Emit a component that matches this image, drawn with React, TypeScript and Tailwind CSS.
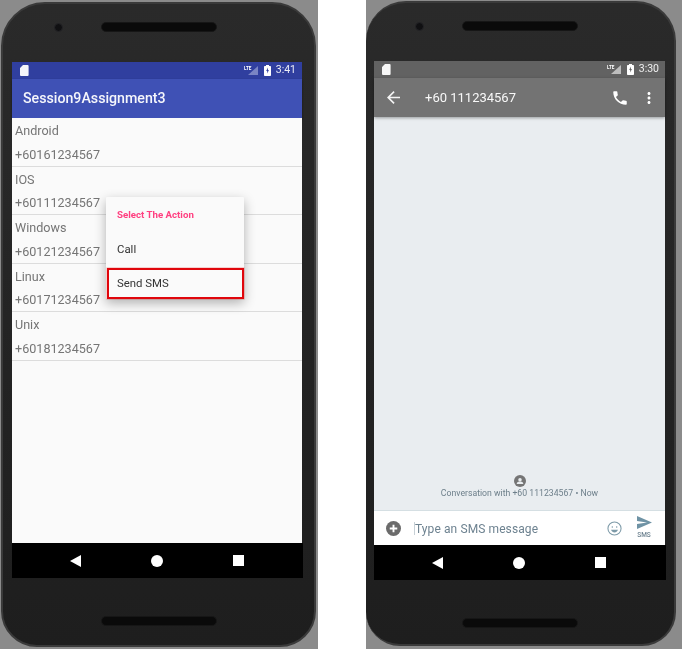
const font = "font-['Roboto',sans-serif]";

function SdIcon() {
  return (
    <svg width="9" height="11" viewBox="0 0 9 11" fill="#fff" className="opacity-95">
      <path d="M3 0h4.600a1 1 0 0 1 1 1v9a1 1 0 0 1-1 1H1a1 1 0 0 1-1-1V3z" />
    </svg>
  );
}

function Signal({ tone }: { tone: string }) {
  return (
    <svg width="15" height="11" viewBox="0 0 15 11">
      <path d="M14 1v9H4z" fill={tone} />
      <text x="0" y="4.500" fontSize="4.600" fontWeight="700" fill="#fff" fontFamily="Roboto, sans-serif">LTE</text>
    </svg>
  );
}

function Battery({ bg }: { bg: string }) {
  return (
    <svg width="7" height="11" viewBox="0 0 7 11">
      <path d="M2 0h3v1h1.200a.8.8 0 0 1 .8.8v8.400a.8.8 0 0 1-.8.8H.8a.8.8 0 0 1-.8-.8V1.800a.8.8 0 0 1 .8-.8H2z" fill="#fff" />
      <path d="M3.900 2.500 2.200 6h1v2.600L4.900 5h-1z" fill={bg} />
    </svg>
  );
}

function StatusBar({ bg, tone, time }: { bg: string; tone: string; time: string }) {
  return (
    <div className="h-[17px] flex items-center justify-between pl-[8px] pr-[6px] shrink-0" style={{ background: bg }}>
      <SdIcon />
      <div className="flex items-center">
        <Signal tone={tone} />
        <span className="ml-[5px]"><Battery bg={bg} /></span>
        <span className="ml-[5px] text-[10.5px] leading-none text-white/90">{time}</span>
      </div>
    </div>
  );
}

function NavBar({ w }: { w: string }) {
  return (
    <div className={`h-[35px] ${w} bg-black flex items-center pl-[58px] shrink-0`}>
      <svg width="11" height="12" viewBox="0 0 11 12"><path d="M11 0v12L0 6z" fill="#fff" /></svg>
      <div className="ml-[70px] w-[12px] h-[12px] rounded-full bg-white" />
      <div className="ml-[70px] w-[11px] h-[11px] bg-white" />
    </div>
  );
}

function Speaker() {
  return (
    <div className="w-[116px] h-[9.500px] rounded-full border border-[#161616] bg-[#181818] bg-[radial-gradient(#0a0a0a_0.8px,transparent_0.8px)] bg-[length:2px_2px]" />
  );
}

function PhoneTop({ offset }: { offset: string }) {
  return (
    <div className="relative h-[60px] shrink-0 flex justify-center pt-[20px]">
      <div className={`absolute top-[21px] ${offset} w-[9px] h-[9px] rounded-full bg-[#101012] border border-[#242427]`} />
      <Speaker />
    </div>
  );
}

const contacts = [
  ["Android", "+60161234567"],
  ["IOS", "+60111234567"],
  ["Windows", "+60121234567"],
  ["Linux", "+60171234567"],
  ["Unix", "+60181234567"],
];

function LeftPhone() {
  return (
    <div className="w-[318px] h-[649px] bg-[#8b8b8b] shrink-0 pl-[1px] pt-[2px]">
      <div className="w-[315px] h-[645px] rounded-t-[44px] rounded-b-[36px] border-[2px] border-[#3a3a3a] bg-gradient-to-b from-[#2a2a2a] to-[#1e1e1e] flex flex-col">
        <div className="-mt-[2px] -mx-[2px]">
          <PhoneTop offset="left-[53px]" />
        </div>
        <div className="ml-[9px] w-[290px] flex flex-col h-[516px] shrink-0">
          <StatusBar bg="#303f9f" tone="#7a85c4" time="3:41" />
          <div className="h-[39px] bg-[#3f51b5] flex items-center pl-[11px] text-[14.2px] font-medium text-white/95 shrink-0 shadow-[0_1px_2px_rgba(0,0,0,0.4)] relative">
            Session9Assignment3
          </div>
          <div className="relative flex-1 bg-[#fafafa]">
            {contacts.map(([name, num]) => (
              <div key={num} className="h-[48.500px] border-b border-[#dcdcdc] pl-[3px] text-[12.6px] leading-none text-[#757575] flex flex-col justify-between pt-[7px] pb-[4px]">
                <div>{name}</div>
                <div>{num}</div>
              </div>
            ))}
            <div className="absolute left-[94px] top-[79px] w-[138px] h-[102px] bg-[#fafafa] shadow-[0_4px_12px_rgba(0,0,0,0.3)] rounded-[1px]">
              <div className="h-[36px] pl-[11px] flex items-center text-[9.7px] font-bold text-[#ff4081]">Select The Action</div>
              <div className="h-[35px] pl-[11px] pb-[1px] flex items-center text-[11.4px] text-[#333]">Call</div>
              <div className="h-[31px] pl-[8px] ml-[1px] flex items-center text-[11.4px] text-[#333] border-[2px] border-[#e0060c] shadow-[0_0_0_0.5px_rgba(220,0,0,0.35)]">Send SMS</div>
            </div>
          </div>
          <NavBar w="w-[291px]" />
        </div>
        <div className="flex justify-center pt-[38px]">
          <Speaker />
        </div>
      </div>
    </div>
  );
}

function RightPhone() {
  return (
    <div className="w-[316px] h-[649px] bg-[#8b8b8b] shrink-0 pr-[6px] pt-[1px]">
      <div className="w-[310px] h-[645px] rounded-t-[40px] rounded-b-[34px] border-r-[2px] border-t-[2px] border-b-[2px] border-[#3a3a3a] bg-gradient-to-b from-[#2a2a2a] to-[#1e1e1e] flex flex-col">
        <div className="-mt-[2px]">
          <PhoneTop offset="left-[49px]" />
        </div>
        <div className="ml-[8px] w-[291px] flex flex-col h-[519px] shrink-0">
          <StatusBar bg="#626262" tone="#bdbdbd" time="3:30" />
          <div className="h-[39px] bg-[#737373] flex items-center pl-[13px] pr-[7px] shrink-0 shadow-[0_1px_3px_rgba(0,0,0,0.35)] relative">
            <svg width="13" height="13" viewBox="4 4 16 16" fill="#f4f4f4">
              <path d="M20 11H7.830l5.590-5.590L12 4l-8 8 8 8 1.410-1.410L7.830 13H20v-2z" />
            </svg>
            <span className="ml-[25px] pt-[1px] text-[13px] text-white/95 flex-1">+60 111234567</span>
            <svg width="18" height="18" viewBox="0 0 24 24" fill="#fff">
              <path d="M6.620 10.790c1.440 2.830 3.760 5.140 6.590 6.590l2.200-2.200c.27-.27.67-.36 1.020-.24 1.120.37 2.330.57 3.570.57.55 0 1 .45 1 1V20c0 .55-.45 1-1 1-9.390 0-17-7.610-17-17 0-.55.45-1 1-1h3.500c.55 0 1 .45 1 1 0 1.250.2 2.450.57 3.570.11.35.03.74-.25 1.020l-2.200 2.200z" />
            </svg>
            <svg className="ml-[11px]" width="18" height="18" viewBox="0 0 24 24" fill="#fff">
              <path d="M12 8c1.100 0 2-.9 2-2s-.9-2-2-2-2 .9-2 2 .9 2 2 2zm0 2c-1.100 0-2 .9-2 2s.9 2 2 2 2-.9 2-2-.9-2-2-2zm0 6c-1.100 0-2 .9-2 2s.9 2 2 2 2-.9 2-2-.9-2-2-2z" />
            </svg>
          </div>
          <div className="flex-1 bg-[#e9edf0] flex flex-col items-center justify-end pb-[11px] border-b border-[#d5dfe3]">
            <svg width="12" height="12" viewBox="0 0 24 24">
              <circle cx="12" cy="12" r="12" fill="#757575" />
              <circle cx="12" cy="9.500" r="3.500" fill="#e9edf0" />
              <path d="M5.500 17c0-2.600 4.300-3.800 6.500-3.800s6.500 1.200 6.500 3.800v.8h-13z" fill="#e9edf0" />
            </svg>
            <div className="text-[8.700px] leading-[12px] text-[#6d7f8a]">Conversation with +60 111234567 • Now</div>
          </div>
          <div className="h-[34px] bg-white flex items-center pl-[12px] pr-[13px] shrink-0">
            <svg width="15" height="15" viewBox="0 0 24 24">
              <circle cx="12" cy="12" r="12" fill="#6b6b6b" />
              <path d="M10.500 6h3v4.500H18v3h-4.500V18h-3v-4.500H6v-3h4.500z" fill="#fff" />
            </svg>
            <span className="ml-[13px] w-[1px] h-[13px] bg-[#c7d0d6]" />
            <span className="pt-[1px] text-[12px] text-[#6d8290] flex-1 tracking-[0.1px]">Type an SMS message</span>
            <svg width="15" height="15" viewBox="0 0 24 24" fill="none" stroke="#7d9aa8" strokeWidth="1.700">
              <circle cx="12" cy="12" r="10.500" />
              <circle cx="8.500" cy="9.500" r="1.200" fill="#7d9aa8" stroke="none" />
              <circle cx="15.500" cy="9.500" r="1.200" fill="#7d9aa8" stroke="none" />
              <path d="M6.500 14c1 3 3.200 4.300 5.500 4.300s4.500-1.300 5.500-4.300z" fill="#7d9aa8" stroke="none" />
            </svg>
            <div className="ml-[14px] flex flex-col items-center w-[16px]">
              <svg width="15" height="13" viewBox="0 0 15 13" fill="#6f93a5">
                <path d="M0 0l15 6.500L0 13V8l10-1.500L0 5z" />
              </svg>
              <span className="text-[6.500px] leading-[9px] mt-[2px] font-medium text-[#6d8290]">SMS</span>
            </div>
          </div>
          <NavBar w="w-[292px]" />
        </div>
        <div className="flex justify-center pt-[38px]">
          <Speaker />
        </div>
      </div>
    </div>
  );
}

export default function App() {
  return (
    <div className={`w-[682px] h-[649px] bg-white flex overflow-hidden gap-[48px] blur-[0.4px] ${font}`}>
      <LeftPhone />
      <RightPhone />
    </div>
  );
}
